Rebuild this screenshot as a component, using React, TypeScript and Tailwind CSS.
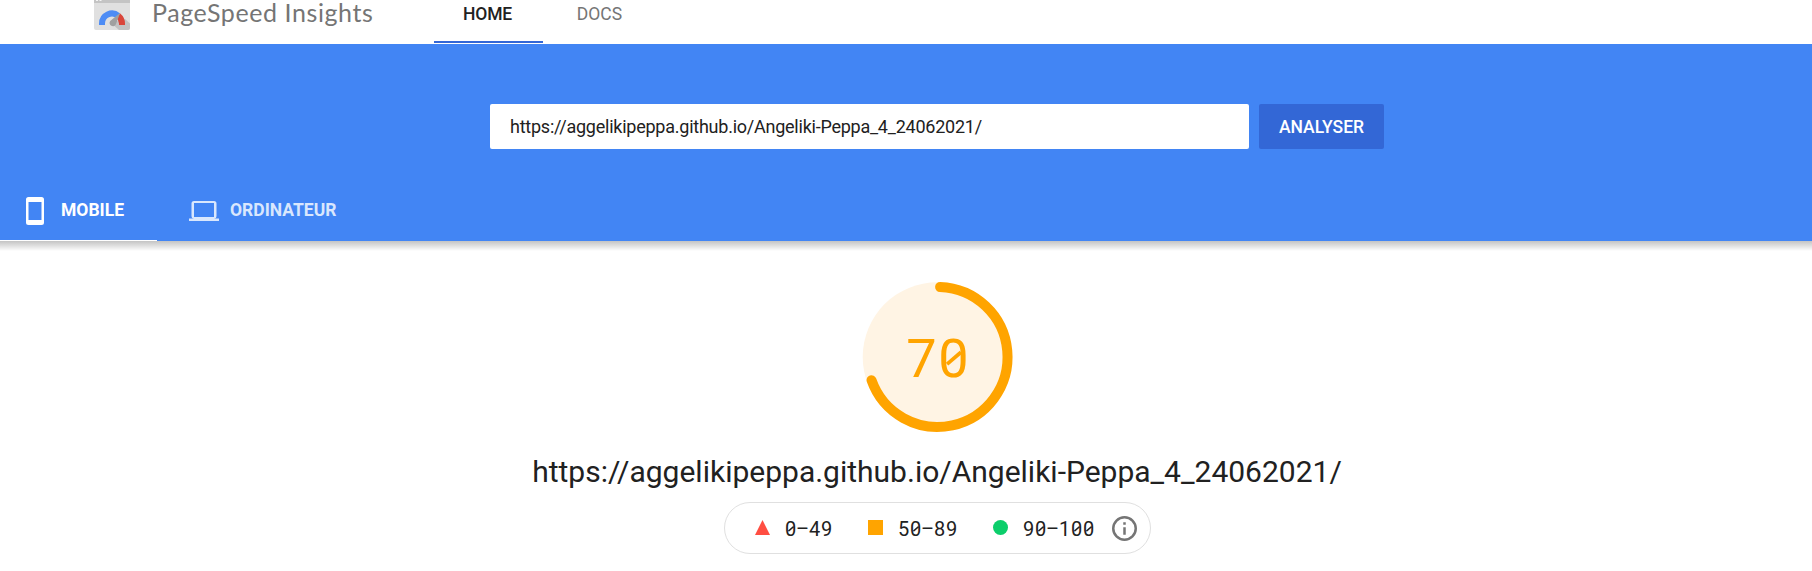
import type { ReactNode } from 'react';

const URL_TEXT = 'https://aggelikipeppa.github.io/Angeliki-Peppa_4_24062021/';

function Logo() {
  return (
    <svg width="36" height="30" viewBox="0 10 36 30" className="block shrink-0">
      <rect width="36" height="40" rx="2" fill="#e0e0e0" />
      <path d="M0 2a2 2 0 0 1 2-2h32a2 2 0 0 1 2 2v11H0z" fill="#c4c4c4" />
      <path d="M2 8h2v3H2zM5.500 8h2v3h-2z" fill="#f5f5f5" />
      <path d="M31 29 36 33.500V38a2 2 0 0 1-2 2h-9l-8-7z" fill="#c2c2c2" />
      <path d="M5 35v-1.500A13 13 0 0 1 26.200 23.400L22.300 28A7 7 0 0 0 11 33.500V35z" fill="#4d8cf5" />
      <path d="M26.200 23.400A13 13 0 0 1 31 33.500V35h-6v-1.500A7 7 0 0 0 22.300 28z" fill="#d9453a" />
      <path d="M26.200 22.800 22 34a3.300 3.300 0 1 1-5.800-3z" fill="#a0a0a0" />
    </svg>
  );
}

function PhoneIcon() {
  return (
    <svg width="18" height="28" viewBox="0 0 18 28" className="block shrink-0">
      <path fillRule="evenodd" d="M2.500 0h13A2.500 2.500 0 0 1 18 2.500v23a2.500 2.500 0 0 1-2.500 2.500h-13A2.500 2.500 0 0 1 0 25.500v-23A2.500 2.500 0 0 1 2.500 0zM2.500 5v18h13V5z" fill="white" />
    </svg>
  );
}

function LaptopIcon() {
  return (
    <svg width="30" height="20" viewBox="0 0 30 20" className="block shrink-0">
      <path fillRule="evenodd" d="M25 17.500h5V20H0v-2.500h5A2.500 2.500 0 0 1 2.500 15V2.500A2.500 2.500 0 0 1 5 0h20a2.500 2.500 0 0 1 2.500 2.500V15a2.500 2.500 0 0 1-2.500 2.500zM5 2v14h20V2z" fill="#d9e7fd" />
    </svg>
  );
}

/* Fixed-width figures with a slashed zero. */
function Figures({ text, cell, slash }: { text: string; cell: string; slash: number }) {
  return (
    <span className="flex">
      {text.split('').map((c, i) => (
        <span key={i} className={`relative flex justify-center ${cell}`}>
          {c}
          {c === '0' && (
            <svg viewBox="0 0 60 117" className="absolute inset-0 h-full w-full" preserveAspectRatio="none">
              <line x1="17" y1="69" x2="43" y2="47" stroke="currentColor" strokeWidth={slash} />
            </svg>
          )}
        </span>
      ))}
    </span>
  );
}

function LegendItem({ mark, text }: { mark: ReactNode; text: string }) {
  return (
    <div className="flex items-center gap-[15px]">
      <svg width="15" height="16" viewBox="0 0 15 16" className="block shrink-0">{mark}</svg>
      <div className="pt-[2px]"><Figures text={text} cell="w-3" slash={7} /></div>
    </div>
  );
}

export default function App() {
  return (
    <div className="h-[571px] w-[1812px] overflow-hidden bg-white font-['Roboto',sans-serif] text-[#212121]">
      <header className="flex h-11 items-start pl-[94px]">
        <Logo />
        <div className="ml-[22px] w-[282px] whitespace-nowrap font-['Lato',sans-serif] text-[25px] leading-[25px] tracking-[0.580px] text-[#757575]">PageSpeed Insights</div>
        <nav className="flex h-[43px] text-[17.500px] leading-7">
          <a className="w-[109px] border-b-2 border-[#3367d6] pr-[2px] text-center font-medium tracking-[-0.200px]">HOME</a>
          <a className="w-[113px] text-center text-[#757575]">DOCS</a>
        </nav>
      </header>

      <section className="flex h-[197px] flex-col justify-between bg-[#4285f4] pt-[60px]">
        <div className="flex h-[45px] gap-[10px] pl-[490px]">
          <div className="flex w-[759px] items-center rounded-[2px] bg-white pl-5 text-[18px] tracking-[-0.240px] whitespace-nowrap">{URL_TEXT}</div>
          <button className="w-[125px] rounded-[2px] bg-[#3367d6] pt-px text-[17.500px] font-medium text-white">ANALYSER</button>
        </div>
        <div className="flex h-[60px] text-[17.500px] font-bold">
          <div className="flex w-[157px] items-center gap-[17px] border-b border-white pl-[26px] text-white">
            <PhoneIcon /><span>MOBILE</span>
          </div>
          <div className="flex items-center gap-[11px] pl-8 text-[#d9e7fd]">
            <LaptopIcon /><span className="-mt-px">ORDINATEUR</span>
          </div>
        </div>
      </section>
      <div className="h-[10px] bg-linear-to-b from-[#c4c4c4] to-white" />

      <main className="flex flex-col items-center pt-[31px] pl-[62px]">
        <div className="grid place-items-center">
          <svg width="150" height="150" viewBox="-0.5 0 150 150" className="col-start-1 row-start-1 block overflow-visible">
            <circle cx="75" cy="75" r="74.800" fill="#fff4e4" />
            <path d="M77.600 5A70 70 0 1 1 9 98.200" fill="none" stroke="#ffa400" strokeWidth="10" strokeLinecap="round" />
          </svg>
          <div className="relative col-start-1 row-start-1 pt-[2px] pl-px text-[54px] leading-[63px] text-[#ffa400]">
            <Figures text="70" cell="w-[32px]" slash={7} />
          </div>
        </div>
        <h1 className="mt-5 text-[30px] leading-[40px] whitespace-nowrap">{URL_TEXT}</h1>
        <div className="mt-[10px] flex h-[52px] w-[427px] items-center rounded-full border border-[#e0e0e0] pl-[30px] text-[20px] leading-6">
          <div className="w-[113px]"><LegendItem text="0–49" mark={<path d="M7.500 0 15 15H0z" fill="#ff4e42" />} /></div>
          <div className="w-[125px]"><LegendItem text="50–89" mark={<path d="M0 0h15v15H0z" fill="#ffa400" />} /></div>
          <div className="w-[119px]"><LegendItem text="90–100" mark={<circle cx="7.500" cy="7.500" r="7.500" fill="#0cce6b" />} /></div>
          <svg width="25" height="25" viewBox="0 0 25 25" className="block shrink-0">
            <circle cx="12.500" cy="12.500" r="11.250" fill="none" stroke="#757575" strokeWidth="2.500" />
            <path d="M11.250 6.250h2.500v2.500h-2.500zM11.250 11.250h2.500v7.500h-2.500z" fill="#757575" />
          </svg>
        </div>
      </main>
    </div>
  );
}
